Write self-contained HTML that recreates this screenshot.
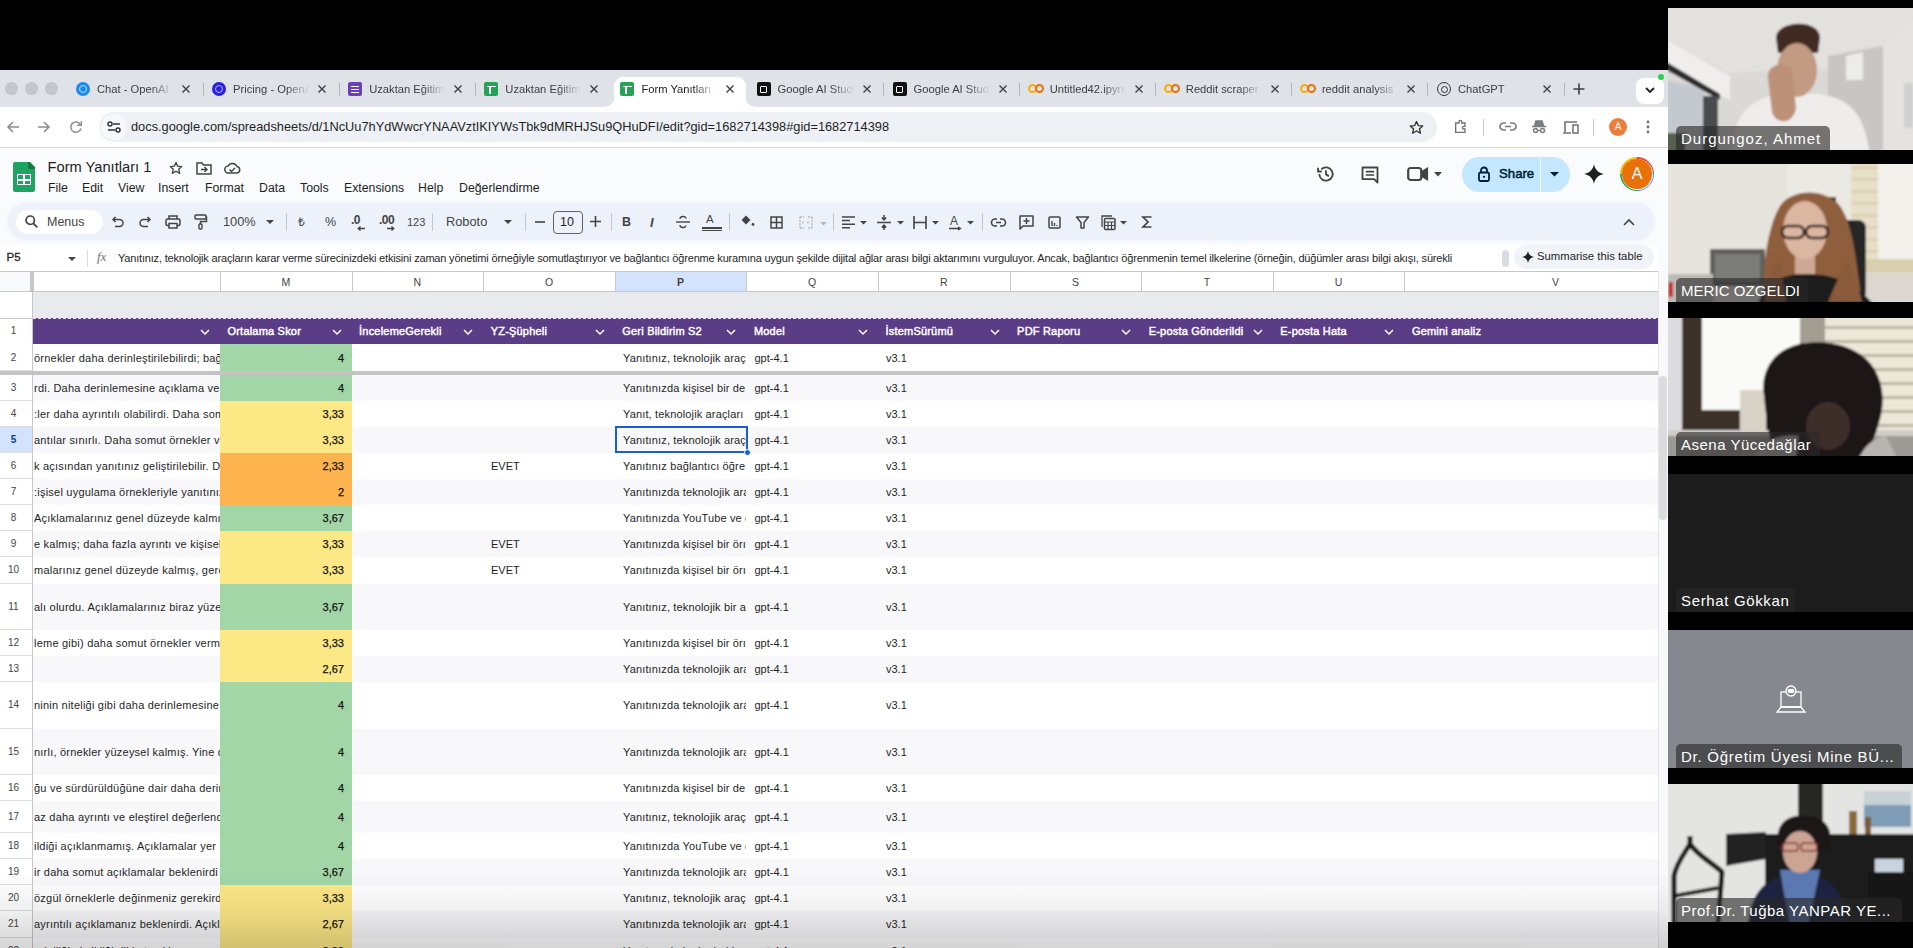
<!DOCTYPE html><html><head><meta charset="utf-8"><style>
*{margin:0;padding:0;box-sizing:border-box}
html,body{width:1913px;height:948px;overflow:hidden;background:#000;font-family:"Liberation Sans",sans-serif}
.ab{position:absolute}
.t{position:absolute;white-space:nowrap;line-height:1}
svg{position:absolute;overflow:visible}
</style></head><body>

<div class="ab" style="left:0;top:70px;width:1668px;height:878px;background:#f9fbfd;overflow:hidden">
<div class="ab" style="left:0;top:0;width:1668px;height:37px;background:#dfe2e7"></div>
<div class="ab" style="left:5.2px;top:12.2px;width:12.6px;height:12.6px;border-radius:50%;background:#c4c6ca"></div>
<div class="ab" style="left:25.2px;top:12.2px;width:12.6px;height:12.6px;border-radius:50%;background:#c4c6ca"></div>
<div class="ab" style="left:45.2px;top:12.2px;width:12.6px;height:12.6px;border-radius:50%;background:#c4c6ca"></div>
<div class="ab" style="left:614px;top:7px;width:132px;height:32px;background:#fff;border-radius:9px 9px 0 0"></div>
<div class="ab" style="left:606px;top:28px;width:8px;height:9px;background:radial-gradient(circle at 0 0,#dfe2e7 8px,#fff 8.5px)"></div>
<div class="ab" style="left:746px;top:28px;width:8px;height:9px;background:radial-gradient(circle at 100% 0,#dfe2e7 8px,#fff 8.5px)"></div>
<div class="ab" style="left:76.0px;top:12px;width:14px;height:14px;border-radius:50%;background:#1a8cf0"></div><div class="ab" style="left:79.0px;top:15px;width:8px;height:8px;border-radius:50%;border:1.3px solid #bfe0ff"></div>
<div class="t" style="left:97.0px;top:14px;font-size:11.2px;color:#3c4043;width:76px;overflow:hidden;-webkit-mask-image:linear-gradient(90deg,#000 70%,transparent)">Chat - OpenAI</div>
<svg style="left:182.0px;top:15px" width="8" height="8"><path d="M0.5 0.5L7.5 7.5M7.5 0.5L0.5 7.5" stroke="#3c4043" stroke-width="1.4"/></svg>
<div class="ab" style="left:202.5px;top:12.5px;width:1px;height:13px;background:#b4b6ba"></div>
<div class="ab" style="left:212.1px;top:12px;width:14px;height:14px;border-radius:50%;background:#2b20e2"></div><div class="ab" style="left:215.1px;top:15px;width:8px;height:8px;border-radius:50%;border:1.3px solid #b6aef7"></div>
<div class="t" style="left:233.1px;top:14px;font-size:11.2px;color:#3c4043;width:76px;overflow:hidden;-webkit-mask-image:linear-gradient(90deg,#000 70%,transparent)">Pricing - OpenAI</div>
<svg style="left:318.1px;top:15px" width="8" height="8"><path d="M0.5 0.5L7.5 7.5M7.5 0.5L0.5 7.5" stroke="#3c4043" stroke-width="1.4"/></svg>
<div class="ab" style="left:338.6px;top:12.5px;width:1px;height:13px;background:#b4b6ba"></div>
<div class="ab" style="left:348.2px;top:12px;width:14px;height:14px;border-radius:2px;background:#6b3fb8"></div><div class="ab" style="left:351.2px;top:15.5px;width:8px;height:7px;background:repeating-linear-gradient(#fff 0 1.4px,transparent 1.4px 2.9px)"></div>
<div class="t" style="left:369.2px;top:14px;font-size:11.2px;color:#3c4043;width:76px;overflow:hidden;-webkit-mask-image:linear-gradient(90deg,#000 70%,transparent)">Uzaktan Eğitim</div>
<svg style="left:454.2px;top:15px" width="8" height="8"><path d="M0.5 0.5L7.5 7.5M7.5 0.5L0.5 7.5" stroke="#3c4043" stroke-width="1.4"/></svg>
<div class="ab" style="left:474.7px;top:12.5px;width:1px;height:13px;background:#b4b6ba"></div>
<div class="ab" style="left:484.29999999999995px;top:12px;width:14px;height:14px;border-radius:2px;background:#23a455"></div><div class="ab" style="left:486.79999999999995px;top:15.5px;width:9px;height:1.6px;background:#fff"></div><div class="ab" style="left:489.29999999999995px;top:15.5px;width:1.6px;height:8px;background:#fff"></div>
<div class="t" style="left:505.29999999999995px;top:14px;font-size:11.2px;color:#3c4043;width:76px;overflow:hidden;-webkit-mask-image:linear-gradient(90deg,#000 70%,transparent)">Uzaktan Eğitim</div>
<svg style="left:590.3px;top:15px" width="8" height="8"><path d="M0.5 0.5L7.5 7.5M7.5 0.5L0.5 7.5" stroke="#3c4043" stroke-width="1.4"/></svg>
<div class="ab" style="left:620.4px;top:12px;width:14px;height:14px;border-radius:2px;background:#23a455"></div><div class="ab" style="left:622.9px;top:15.5px;width:9px;height:1.6px;background:#fff"></div><div class="ab" style="left:625.4px;top:15.5px;width:1.6px;height:8px;background:#fff"></div>
<div class="t" style="left:641.4px;top:14px;font-size:11.2px;color:#1f1f1f;width:76px;overflow:hidden;-webkit-mask-image:linear-gradient(90deg,#000 70%,transparent)">Form Yanıtları 1</div>
<svg style="left:726.4px;top:15px" width="8" height="8"><path d="M0.5 0.5L7.5 7.5M7.5 0.5L0.5 7.5" stroke="#3c4043" stroke-width="1.4"/></svg>
<div class="ab" style="left:756.5px;top:12px;width:14px;height:14px;border-radius:2px;background:#111"></div><div class="ab" style="left:760.0px;top:15.5px;width:7px;height:7px;border:1.3px solid #fff;border-radius:1px"></div>
<div class="t" style="left:777.5px;top:14px;font-size:11.2px;color:#3c4043;width:76px;overflow:hidden;-webkit-mask-image:linear-gradient(90deg,#000 70%,transparent)">Google AI Studio</div>
<svg style="left:862.5px;top:15px" width="8" height="8"><path d="M0.5 0.5L7.5 7.5M7.5 0.5L0.5 7.5" stroke="#3c4043" stroke-width="1.4"/></svg>
<div class="ab" style="left:883.0px;top:12.5px;width:1px;height:13px;background:#b4b6ba"></div>
<div class="ab" style="left:892.5999999999999px;top:12px;width:14px;height:14px;border-radius:2px;background:#111"></div><div class="ab" style="left:896.0999999999999px;top:15.5px;width:7px;height:7px;border:1.3px solid #fff;border-radius:1px"></div>
<div class="t" style="left:913.5999999999999px;top:14px;font-size:11.2px;color:#3c4043;width:76px;overflow:hidden;-webkit-mask-image:linear-gradient(90deg,#000 70%,transparent)">Google AI Studio</div>
<svg style="left:998.5999999999999px;top:15px" width="8" height="8"><path d="M0.5 0.5L7.5 7.5M7.5 0.5L0.5 7.5" stroke="#3c4043" stroke-width="1.4"/></svg>
<div class="ab" style="left:1019.0999999999999px;top:12.5px;width:1px;height:13px;background:#b4b6ba"></div>
<div class="ab" style="left:1027.6999999999998px;top:14px;width:9px;height:9px;border-radius:50%;border:2.6px solid #f9ab00"></div><div class="ab" style="left:1034.6999999999998px;top:14px;width:9px;height:9px;border-radius:50%;border:2.6px solid #e8710a"></div>
<div class="t" style="left:1049.6999999999998px;top:14px;font-size:11.2px;color:#3c4043;width:76px;overflow:hidden;-webkit-mask-image:linear-gradient(90deg,#000 70%,transparent)">Untitled42.ipynb</div>
<svg style="left:1134.6999999999998px;top:15px" width="8" height="8"><path d="M0.5 0.5L7.5 7.5M7.5 0.5L0.5 7.5" stroke="#3c4043" stroke-width="1.4"/></svg>
<div class="ab" style="left:1155.1999999999998px;top:12.5px;width:1px;height:13px;background:#b4b6ba"></div>
<div class="ab" style="left:1163.8px;top:14px;width:9px;height:9px;border-radius:50%;border:2.6px solid #f9ab00"></div><div class="ab" style="left:1170.8px;top:14px;width:9px;height:9px;border-radius:50%;border:2.6px solid #e8710a"></div>
<div class="t" style="left:1185.8px;top:14px;font-size:11.2px;color:#3c4043;width:76px;overflow:hidden;-webkit-mask-image:linear-gradient(90deg,#000 70%,transparent)">Reddit scraper</div>
<svg style="left:1270.8px;top:15px" width="8" height="8"><path d="M0.5 0.5L7.5 7.5M7.5 0.5L0.5 7.5" stroke="#3c4043" stroke-width="1.4"/></svg>
<div class="ab" style="left:1291.3px;top:12.5px;width:1px;height:13px;background:#b4b6ba"></div>
<div class="ab" style="left:1299.8999999999999px;top:14px;width:9px;height:9px;border-radius:50%;border:2.6px solid #f9ab00"></div><div class="ab" style="left:1306.8999999999999px;top:14px;width:9px;height:9px;border-radius:50%;border:2.6px solid #e8710a"></div>
<div class="t" style="left:1321.8999999999999px;top:14px;font-size:11.2px;color:#3c4043;width:76px;overflow:hidden;-webkit-mask-image:linear-gradient(90deg,#000 70%,transparent)">reddit analysis</div>
<svg style="left:1406.8999999999999px;top:15px" width="8" height="8"><path d="M0.5 0.5L7.5 7.5M7.5 0.5L0.5 7.5" stroke="#3c4043" stroke-width="1.4"/></svg>
<div class="ab" style="left:1427.3999999999999px;top:12.5px;width:1px;height:13px;background:#b4b6ba"></div>
<div class="ab" style="left:1437.0px;top:12px;width:14px;height:14px;border-radius:50%;border:1.6px solid #333"></div><div class="ab" style="left:1440.5px;top:15.5px;width:7px;height:7px;border-radius:50%;border:1.3px solid #333"></div>
<div class="t" style="left:1458.0px;top:14px;font-size:11.2px;color:#3c4043;width:76px;overflow:hidden;-webkit-mask-image:linear-gradient(90deg,#000 70%,transparent)">ChatGPT</div>
<svg style="left:1543.0px;top:15px" width="8" height="8"><path d="M0.5 0.5L7.5 7.5M7.5 0.5L0.5 7.5" stroke="#3c4043" stroke-width="1.4"/></svg>
<div class="ab" style="left:1563.5px;top:12.5px;width:1px;height:13px;background:#b4b6ba"></div>
<svg style="left:1573px;top:13px" width="12" height="12"><path d="M6 0.5V11.5M0.5 6H11.5" stroke="#3c4043" stroke-width="1.6"/></svg>
<div class="ab" style="left:1636px;top:8px;width:28px;height:26px;border-radius:8px;background:#fff"></div>
<svg style="left:1645px;top:17px" width="10" height="7"><path d="M1 1L5 5L9 1" stroke="#1f1f1f" stroke-width="1.8" fill="none"/></svg>
<div class="ab" style="left:1658px;top:4px;width:6px;height:6px;border-radius:50%;background:#2bd14a"></div>
<div class="ab" style="left:0;top:37px;width:1668px;height:40px;background:#fff"></div>
<div class="ab" style="left:0;top:77px;width:1668px;height:1px;background:#d9dbdf"></div>
<svg style="left:6px;top:50px" width="14" height="14"><path d="M13 7H2M7 2L2 7L7 12" stroke="#8a8d91" stroke-width="1.6" fill="none"/></svg>
<svg style="left:37px;top:50px" width="14" height="14"><path d="M1 7H12M7 2L12 7L7 12" stroke="#8a8d91" stroke-width="1.6" fill="none"/></svg>
<svg style="left:69px;top:50px" width="14" height="14"><path d="M11.5 4.5A5.2 5.2 0 1 0 12 8.5" stroke="#8a8d91" stroke-width="1.5" fill="none"/><path d="M12.3 1.2V5.3H8.2" stroke="#8a8d91" stroke-width="1.5" fill="none"/></svg>
<div class="ab" style="left:99px;top:42px;width:1338px;height:30px;border-radius:15px;background:#edf1f6"></div>
<div class="ab" style="left:101px;top:44px;width:26px;height:26px;border-radius:13px;background:#f6f8fb"></div>
<svg style="left:107px;top:51px" width="14" height="12"><circle cx="3" cy="3" r="2" stroke="#333" stroke-width="1.5" fill="none"/><path d="M6 3H13M1 9H8" stroke="#333" stroke-width="1.6"/><circle cx="11" cy="9" r="2" stroke="#333" stroke-width="1.5" fill="none"/></svg>
<div class="t" style="left:131px;top:51px;font-size:12.8px;color:#1f1f1f">docs.google.com/spreadsheets/d/1NcUu7hYdWwcrYNAAVztIKIYWsTbk9dMRHJSu9QHuDFI/edit?gid=1682714398#gid=1682714398</div>
<svg style="left:1409px;top:50px" width="15" height="15" viewBox="0 0 24 24"><path d="M12 2.5l2.9 6.4 7 .7-5.2 4.7 1.5 6.9L12 17.6l-6.2 3.6 1.5-6.9L2.1 9.6l7-.7z" stroke="#333" stroke-width="2.2" fill="none" stroke-linejoin="round"/></svg>
<svg style="left:1453px;top:49px" width="16" height="16" viewBox="0 0 24 24"><path d="M4 6h5V4a2 2 0 0 1 4 0v2h5v5h-2a2 2 0 0 0 0 4h2v5H4z" stroke="#6f7276" stroke-width="2" fill="none"/></svg>
<div class="ab" style="left:1483px;top:49px;width:1px;height:17px;background:#c8cacd"></div>
<svg style="left:1499px;top:52px" width="18" height="10"><path d="M7 1H4.5A3.5 3.5 0 0 0 4.5 8H7M11 1H13.5A3.5 3.5 0 0 1 13.5 8H11M6 4.5H12" stroke="#7a7d82" stroke-width="1.7" fill="none"/></svg>
<svg style="left:1531px;top:49px" width="16" height="16"><path d="M1 7.5H15M3.5 7L5 2H11L12.5 7" stroke="#7a7d82" stroke-width="1.6" fill="#7a7d82"/><circle cx="4.5" cy="11.5" r="2" stroke="#7a7d82" stroke-width="1.5" fill="none"/><circle cx="11.5" cy="11.5" r="2" stroke="#7a7d82" stroke-width="1.5" fill="none"/><path d="M6.5 11.5H9.5" stroke="#7a7d82" stroke-width="1.2"/></svg>
<svg style="left:1562px;top:50px" width="18" height="15"><path d="M3 12V2H15M1 13H9" stroke="#6f7276" stroke-width="1.6" fill="none"/><rect x="11" y="5" width="5" height="8" stroke="#6f7276" stroke-width="1.5" fill="none"/></svg>
<div class="ab" style="left:1593px;top:49px;width:1px;height:17px;background:#c8cacd"></div>
<div class="ab" style="left:1609px;top:48px;width:18px;height:18px;border-radius:50%;background:#ee7d3b;color:#fff;font-size:10px;text-align:center;line-height:18px">A</div>
<svg style="left:1646px;top:50px" width="4" height="14"><circle cx="2" cy="2" r="1.4" fill="#6f7276"/><circle cx="2" cy="7" r="1.4" fill="#6f7276"/><circle cx="2" cy="12" r="1.4" fill="#6f7276"/></svg>
<div class="ab" style="left:13px;top:92px;width:22px;height:30px;background:#1ea362;border-radius:2px 7px 2px 2px"></div>
<div class="ab" style="left:28px;top:92px;width:7px;height:7px;background:#137a43;border-radius:0 0 0 2px"></div>
<div class="ab" style="left:29px;top:91px;width:7px;height:7px;background:#f9fbfd;clip-path:polygon(0 0,100% 0,100% 100%)"></div>
<div class="ab" style="left:17px;top:104px;width:14px;height:11px;border:1.8px solid #fff"></div><div class="ab" style="left:17px;top:109px;width:14px;height:1.6px;background:#fff"></div><div class="ab" style="left:23.2px;top:104px;width:1.6px;height:11px;background:#fff"></div>
<div class="t" style="left:47.5px;top:90px;font-size:14.7px;color:#1f1f1f">Form Yanıtları 1</div>
<svg style="left:169px;top:91px" width="14" height="14" viewBox="0 0 24 24"><path d="M12 2.5l2.9 6.4 7 .7-5.2 4.7 1.5 6.9L12 17.6l-6.2 3.6 1.5-6.9L2.1 9.6l7-.7z" stroke="#444" stroke-width="2.3" fill="none" stroke-linejoin="round"/></svg>
<svg style="left:196px;top:92px" width="16" height="13"><path d="M1 1H6L7.5 3H15V12H1Z" stroke="#444" stroke-width="1.5" fill="none"/><path d="M5 7.5H11M8.5 5L11 7.5L8.5 10" stroke="#444" stroke-width="1.4" fill="none"/></svg>
<svg style="left:224px;top:92px" width="17" height="12"><path d="M4.5 11A3.5 3.5 0 0 1 4 4A5 5 0 0 1 13 4.5A3.3 3.3 0 0 1 13 11Z" stroke="#444" stroke-width="1.5" fill="none"/><path d="M5.5 7.5L7.5 9.5L11 6" stroke="#444" stroke-width="1.4" fill="none"/></svg>
<div class="t" style="left:48px;top:112px;font-size:12.3px;color:#1f1f1f">File</div>
<div class="t" style="left:82px;top:112px;font-size:12.3px;color:#1f1f1f">Edit</div>
<div class="t" style="left:118px;top:112px;font-size:12.3px;color:#1f1f1f">View</div>
<div class="t" style="left:158px;top:112px;font-size:12.3px;color:#1f1f1f">Insert</div>
<div class="t" style="left:205px;top:112px;font-size:12.3px;color:#1f1f1f">Format</div>
<div class="t" style="left:259px;top:112px;font-size:12.3px;color:#1f1f1f">Data</div>
<div class="t" style="left:300px;top:112px;font-size:12.3px;color:#1f1f1f">Tools</div>
<div class="t" style="left:344px;top:112px;font-size:12.3px;color:#1f1f1f">Extensions</div>
<div class="t" style="left:418px;top:112px;font-size:12.3px;color:#1f1f1f">Help</div>
<div class="t" style="left:459px;top:112px;font-size:12.3px;color:#1f1f1f">Değerlendirme</div>
<svg style="left:1316px;top:94px" width="20" height="20" viewBox="0 0 24 24"><path d="M4 12a8 8 0 1 0 2.4-5.7" stroke="#444" stroke-width="2.2" fill="none"/><path d="M2.5 4.5V9h4.5" stroke="#444" stroke-width="2.2" fill="none"/><path d="M12 7.5V12.5L15.5 14.5" stroke="#444" stroke-width="2.2" fill="none"/></svg>
<svg style="left:1360px;top:95px" width="20" height="20" viewBox="0 0 24 24"><path d="M3 3h18v14v4l-4-4H3z" stroke="#444" stroke-width="2.2" fill="none" stroke-linejoin="round"/><path d="M7 8h10M7 12h10" stroke="#444" stroke-width="2"/></svg>
<svg style="left:1407px;top:96px" width="22" height="16" viewBox="0 0 22 16"><rect x="1.2" y="2" width="13" height="12" rx="2.5" stroke="#444" stroke-width="2.2" fill="none"/><path d="M15 6L20 3V13L15 10" stroke="#444" stroke-width="2.2" fill="#444"/></svg>
<svg style="left:1434px;top:102px" width="8" height="5"><path d="M0 0H8L4 4.5Z" fill="#444"/></svg>
<div class="ab" style="left:1462px;top:87px;width:108px;height:35px;border-radius:18px;background:#c2e7ff"></div>
<div class="ab" style="left:1540px;top:87px;width:1px;height:35px;background:#f9fbfd"></div>
<svg style="left:1478px;top:96px" width="12" height="16"><rect x="1" y="6.5" width="10" height="8.5" rx="1.5" stroke="#001d35" stroke-width="1.8" fill="none"/><path d="M3 6.5V4.5A3 3 0 0 1 9 4.5V6.5" stroke="#001d35" stroke-width="1.8" fill="none"/><circle cx="6" cy="10.8" r="1.1" fill="#001d35"/></svg>
<div class="t" style="left:1499px;top:97px;font-size:13.2px;font-weight:400;-webkit-text-stroke:0.5px #001d35;color:#001d35">Share</div>
<svg style="left:1550px;top:102px" width="9" height="5"><path d="M0 0H9L4.5 4.5Z" fill="#001d35"/></svg>
<svg style="left:1584px;top:94px" width="20" height="20" viewBox="0 0 20 20"><path d="M10 0C10.8 5.5 14.5 9.2 20 10C14.5 10.8 10.8 14.5 10 20C9.2 14.5 5.5 10.8 0 10C5.5 9.2 9.2 5.5 10 0Z" fill="#1f1f1f"/></svg>
<div class="ab" style="left:1620px;top:87px;width:34px;height:34px;border-radius:50%;background:conic-gradient(#ea4335 0 25%,#4285f4 25% 50%,#34a853 50% 75%,#fbbc04 75%)"></div>
<div class="ab" style="left:1621.5px;top:88.5px;width:31px;height:31px;border-radius:50%;background:#fff"></div>
<div class="ab" style="left:1622.3px;top:89.30000000000001px;width:29.4px;height:29.4px;border-radius:50%;background:#e8710a;color:#fff;font-size:16px;text-align:center;line-height:29.4px">A</div>
<div class="ab" style="left:8px;top:133px;width:1646px;height:37px;border-radius:19px;background:#edf2fa;box-shadow:0 0 3px 1px #f0f3f9"></div>
<div class="ab" style="left:15.5px;top:140px;width:87px;height:24px;border-radius:12px;background:#fff"></div>
<svg style="left:25px;top:145px" width="13" height="13"><circle cx="5.2" cy="5.2" r="4.2" stroke="#444" stroke-width="1.7" fill="none"/><path d="M8.3 8.3L12.3 12.3" stroke="#444" stroke-width="1.9"/></svg>
<div class="t" style="left:47px;top:146px;font-size:12.5px;color:#444">Menus</div>
<svg style="left:112px;top:146px" width="12" height="11"><path d="M3.5 1L1 3.5L3.5 6M1 3.5H7.5A3.5 3.5 0 0 1 7.5 10.5H3" stroke="#444" stroke-width="1.5" fill="none"/></svg>
<svg style="left:139px;top:146px" width="12" height="11"><path d="M8.5 1L11 3.5L8.5 6M11 3.5H4.5A3.5 3.5 0 0 0 4.5 10.5H9" stroke="#444" stroke-width="1.5" fill="none"/></svg>
<svg style="left:165px;top:145px" width="16" height="14"><path d="M4 4V1H12V4" stroke="#444" stroke-width="1.5" fill="none"/><rect x="1" y="4" width="14" height="6.5" rx="1.5" stroke="#444" stroke-width="1.5" fill="none"/><rect x="4" y="8.5" width="8" height="4.5" stroke="#444" stroke-width="1.5" fill="#edf2fa"/></svg>
<svg style="left:194px;top:144px" width="13" height="16"><rect x="1" y="1" width="11" height="4" rx="1" stroke="#444" stroke-width="1.5" fill="none"/><path d="M12 3H12.5V7.5H6.5V10" stroke="#444" stroke-width="1.5" fill="none"/><rect x="5" y="10" width="3" height="5" rx="1" stroke="#444" stroke-width="1.4" fill="none"/></svg>
<div class="t" style="left:223px;top:146px;font-size:12.8px;color:#444">100%</div>
<svg style="left:266px;top:150px" width="8" height="4"><path d="M0 0H8L4 4Z" fill="#444"/></svg>
<div class="ab" style="left:286px;top:143px;width:1px;height:18px;background:#c7c7c7"></div>
<div class="t" style="left:298px;top:146px;font-size:12px;color:#444">₺</div>
<div class="t" style="left:325px;top:146px;font-size:12.5px;color:#444">%</div>
<div class="t" style="left:351px;top:144px;font-size:12px;color:#444;font-weight:700;letter-spacing:-0.5px">.0</div>
<svg style="left:357px;top:156px" width="8" height="5"><path d="M8 2.5H1.5M3.5 0.5L1.2 2.5L3.5 4.5" stroke="#444" stroke-width="1.3" fill="none"/></svg>
<div class="t" style="left:379px;top:144px;font-size:12px;color:#444;font-weight:700;letter-spacing:-0.5px">.00</div>
<svg style="left:387px;top:156px" width="8" height="5"><path d="M0 2.5H6.5M4.5 0.5L6.8 2.5L4.5 4.5" stroke="#444" stroke-width="1.3" fill="none"/></svg>
<div class="t" style="left:407px;top:147px;font-size:11px;color:#444">123</div>
<div class="ab" style="left:432px;top:143px;width:1px;height:18px;background:#c7c7c7"></div>
<div class="t" style="left:446px;top:146px;font-size:12.8px;color:#444">Roboto</div>
<svg style="left:504px;top:150px" width="8" height="4"><path d="M0 0H8L4 4Z" fill="#444"/></svg>
<div class="ab" style="left:525px;top:143px;width:1px;height:18px;background:#c7c7c7"></div>
<svg style="left:535px;top:151px" width="10" height="2"><path d="M0 1H10" stroke="#444" stroke-width="1.6"/></svg>
<div class="ab" style="left:553px;top:141px;width:30px;height:23px;border-radius:4px;border:1.3px solid #5f6368"></div>
<div class="t" style="left:560px;top:146px;font-size:12.5px;color:#1f1f1f">10</div>
<svg style="left:590px;top:146px" width="11" height="11"><path d="M0 5.5H11M5.5 0V11" stroke="#444" stroke-width="1.6"/></svg>
<div class="ab" style="left:611px;top:143px;width:1px;height:18px;background:#c7c7c7"></div>
<div class="t" style="left:622px;top:146px;font-size:12.5px;font-weight:700;color:#444">B</div>
<div class="t" style="left:650px;top:146px;font-size:13px;font-weight:700;font-style:italic;color:#444">I</div>
<svg style="left:676px;top:146px" width="14" height="12"><path d="M0 6H14" stroke="#444" stroke-width="1.4"/><path d="M10 2.5A3 2.2 0 0 0 4 3M4 9A3 2.2 0 0 0 10 9.5" stroke="#444" stroke-width="1.4" fill="none"/></svg>
<div class="t" style="left:706px;top:144px;font-size:11.5px;color:#444">A</div>
<div class="ab" style="left:702px;top:157px;width:20px;height:1.5px;background:#444"></div><div class="ab" style="left:702px;top:160px;width:20px;height:1.2px;background:#444"></div>
<div class="ab" style="left:729px;top:143px;width:1px;height:18px;background:#c7c7c7"></div>
<svg style="left:740px;top:144px" width="15" height="13"><path d="M1.5 6L6 1.5L10.5 6L6 10.5Z" fill="#444"/><circle cx="13" cy="10.5" r="1.4" fill="#444"/></svg>
<svg style="left:770px;top:146px" width="13" height="13"><rect x="1" y="1" width="11" height="11" stroke="#444" stroke-width="1.5" fill="none"/><path d="M6.5 1V12M1 6.5H12" stroke="#444" stroke-width="1.5"/></svg>
<svg style="left:799px;top:146px" width="14" height="13"><path d="M1 1H5M9 1H13M1 12H5M9 12H13M1 1V12M13 1V12M3 6.5H6M8 6.5H11" stroke="#b7b9bd" stroke-width="1.4" fill="none" stroke-dasharray="2 1"/></svg>
<svg style="left:820px;top:152px" width="7" height="4"><path d="M0 0H7L3.5 3.5Z" fill="#b7b9bd"/></svg>
<div class="ab" style="left:833px;top:143px;width:1px;height:18px;background:#c7c7c7"></div>
<svg style="left:842px;top:146px" width="13" height="13"><path d="M0 1H13M0 4.6H8M0 8.2H13M0 11.8H8" stroke="#444" stroke-width="1.5"/></svg>
<svg style="left:860px;top:151px" width="7" height="4"><path d="M0 0H7L3.5 3.5Z" fill="#444"/></svg>
<svg style="left:877px;top:145px" width="14" height="15"><path d="M0 7.5H14M7 0V5M4.8 2.5L7 4.8L9.2 2.5M7 15V10M4.8 12.5L7 10.2L9.2 12.5" stroke="#444" stroke-width="1.5" fill="none"/></svg>
<svg style="left:897px;top:151px" width="7" height="4"><path d="M0 0H7L3.5 3.5Z" fill="#444"/></svg>
<svg style="left:913px;top:146px" width="14" height="13"><path d="M1 0V13M13 0V13M1 6.5H13" stroke="#444" stroke-width="1.6" fill="none"/></svg>
<svg style="left:932px;top:151px" width="7" height="4"><path d="M0 0H7L3.5 3.5Z" fill="#444"/></svg>
<div class="t" style="left:950px;top:145px;font-size:12px;color:#444">A</div>
<svg style="left:949px;top:157px" width="14" height="4"><path d="M0 1.5H11M9 0L11.5 1.5L9 3" stroke="#444" stroke-width="1.3" fill="none"/></svg>
<svg style="left:967px;top:151px" width="7" height="4"><path d="M0 0H7L3.5 3.5Z" fill="#444"/></svg>
<div class="ab" style="left:982px;top:143px;width:1px;height:18px;background:#c7c7c7"></div>
<svg style="left:991px;top:148px" width="15" height="9"><path d="M6 1H4A3.5 3.5 0 0 0 4 8H6M9 1H11A3.5 3.5 0 0 1 11 8H9M5 4.5H10" stroke="#444" stroke-width="1.6" fill="none"/></svg>
<svg style="left:1019px;top:145px" width="15" height="15"><path d="M1 1H14V11H4L1 14Z" stroke="#444" stroke-width="1.5" fill="none" stroke-linejoin="round"/><path d="M7.5 3V9M4.5 6H10.5" stroke="#444" stroke-width="1.5"/></svg>
<svg style="left:1048px;top:146px" width="13" height="13"><rect x="1" y="1" width="11" height="11" rx="1" stroke="#444" stroke-width="1.5" fill="none"/><path d="M4 5V10M6.5 7V10M9 9V10" stroke="#444" stroke-width="1.4"/></svg>
<svg style="left:1076px;top:146px" width="13" height="13"><path d="M0.5 1H12.5L8 6.5V12H5V6.5Z" stroke="#444" stroke-width="1.5" fill="none" stroke-linejoin="round"/></svg>
<svg style="left:1101px;top:145px" width="15" height="15"><path d="M1 12V1H11" stroke="#444" stroke-width="1.3" fill="none"/><rect x="3.5" y="3.5" width="10.5" height="11" rx="1" stroke="#444" stroke-width="1.5" fill="none"/><path d="M3.5 7H14M7 7V14.5M10.5 7V14.5M3.5 10.5H14" stroke="#444" stroke-width="1.2"/></svg>
<svg style="left:1120px;top:151px" width="7" height="4"><path d="M0 0H7L3.5 3.5Z" fill="#444"/></svg>
<svg style="left:1142px;top:146px" width="10" height="12"><path d="M9.5 1H1L6 6L1 11H9.5" stroke="#444" stroke-width="1.7" fill="none"/></svg>
<svg style="left:1623px;top:149px" width="12" height="7"><path d="M1 6L6 1L11 6" stroke="#444" stroke-width="1.6" fill="none"/></svg>
<div class="ab" style="left:0;top:175px;width:1658px;height:26px;background:#fff"></div>
<div class="t" style="left:6.5px;top:182px;font-size:11.5px;color:#1f1f1f;-webkit-text-stroke:0.3px #1f1f1f">P5</div>
<svg style="left:68px;top:187px" width="8" height="4"><path d="M0 0H8L4 4Z" fill="#444"/></svg>
<div class="ab" style="left:86.5px;top:180px;width:1px;height:17px;background:#dadce0"></div>
<div class="t" style="left:97px;top:180px;font-size:13px;font-family:'Liberation Serif',serif;font-style:italic;color:#6f7378">fx</div>
<div class="t" style="left:118px;top:183px;font-size:11px;letter-spacing:-0.185px;color:#1f1f1f">Yanıtınız, teknolojik araçların karar verme sürecinizdeki etkisini zaman yönetimi örneğiyle somutlaştırıyor ve bağlantıcı öğrenme kuramına uygun şekilde dijital ağlar arası bilgi aktarımını vurguluyor. Ancak, bağlantıcı öğrenmenin temel ilkelerine (örneğin, düğümler arası bilgi akışı, sürekli</div>
<div class="ab" style="left:1502px;top:180px;width:7px;height:17px;border-radius:3.5px;background:#dadce0"></div>
<div class="ab" style="left:1514px;top:175px;width:140px;height:24px;border-radius:12px;background:#f0f4f9"></div>
<svg style="left:1522px;top:181px" width="12" height="12"><path d="M6 0C6.5 3.3 8.7 5.5 12 6C8.7 6.5 6.5 8.7 6 12C5.5 8.7 3.3 6.5 0 6C3.3 5.5 5.5 3.3 6 0Z" fill="#1f1f1f"/></svg>
<div class="t" style="left:1537px;top:181px;font-size:11.3px;color:#1f1f1f">Summarise this table</div>
<div class="ab" style="left:0;top:201px;width:1658px;height:21px;background:#fff;border-top:1px solid #c7c7c7;border-bottom:1px solid #c7c7c7"></div>
<div class="ab" style="left:0;top:202px;width:30px;height:19px;background:#f8f9fa"></div>
<div class="ab" style="left:29.5px;top:202px;width:4px;height:20px;background:#c7c7c7"></div>
<div class="ab" style="left:220.0px;top:202px;width:131.60000000000002px;height:19px;background:#fff;border-left:1px solid #c7c7c7"></div>
<div class="t" style="left:220.0px;width:131.60000000000002px;text-align:center;top:207px;font-size:10.5px;color:#444;font-weight:400">M</div>
<div class="ab" style="left:351.6px;top:202px;width:131.60000000000002px;height:19px;background:#fff;border-left:1px solid #c7c7c7"></div>
<div class="t" style="left:351.6px;width:131.60000000000002px;text-align:center;top:207px;font-size:10.5px;color:#444;font-weight:400">N</div>
<div class="ab" style="left:483.20000000000005px;top:202px;width:131.60000000000002px;height:19px;background:#fff;border-left:1px solid #c7c7c7"></div>
<div class="t" style="left:483.20000000000005px;width:131.60000000000002px;text-align:center;top:207px;font-size:10.5px;color:#444;font-weight:400">O</div>
<div class="ab" style="left:614.8000000000001px;top:202px;width:131.60000000000002px;height:19px;background:#d3e3fd;border-left:1px solid #c7c7c7"></div>
<div class="t" style="left:614.8000000000001px;width:131.60000000000002px;text-align:center;top:207px;font-size:10.5px;color:#444;font-weight:700">P</div>
<div class="ab" style="left:746.4000000000001px;top:202px;width:131.60000000000002px;height:19px;background:#fff;border-left:1px solid #c7c7c7"></div>
<div class="t" style="left:746.4000000000001px;width:131.60000000000002px;text-align:center;top:207px;font-size:10.5px;color:#444;font-weight:400">Q</div>
<div class="ab" style="left:878.0000000000001px;top:202px;width:131.60000000000002px;height:19px;background:#fff;border-left:1px solid #c7c7c7"></div>
<div class="t" style="left:878.0000000000001px;width:131.60000000000002px;text-align:center;top:207px;font-size:10.5px;color:#444;font-weight:400">R</div>
<div class="ab" style="left:1009.6000000000001px;top:202px;width:131.5999999999999px;height:19px;background:#fff;border-left:1px solid #c7c7c7"></div>
<div class="t" style="left:1009.6000000000001px;width:131.5999999999999px;text-align:center;top:207px;font-size:10.5px;color:#444;font-weight:400">S</div>
<div class="ab" style="left:1141.2px;top:202px;width:131.5999999999999px;height:19px;background:#fff;border-left:1px solid #c7c7c7"></div>
<div class="t" style="left:1141.2px;width:131.5999999999999px;text-align:center;top:207px;font-size:10.5px;color:#444;font-weight:400">T</div>
<div class="ab" style="left:1272.8px;top:202px;width:131.5999999999999px;height:19px;background:#fff;border-left:1px solid #c7c7c7"></div>
<div class="t" style="left:1272.8px;width:131.5999999999999px;text-align:center;top:207px;font-size:10.5px;color:#444;font-weight:400">U</div>
<div class="ab" style="left:1404.3999999999999px;top:202px;width:253.60000000000014px;height:19px;background:#fff;border-left:1px solid #c7c7c7"></div>
<div class="t" style="left:1404.3999999999999px;width:302px;text-align:center;top:207px;font-size:10.5px;color:#444;font-weight:400">V</div>
<div class="ab" style="left:0;top:222px;width:33px;height:26px;background:#fff;border-right:1px solid #c7c7c7"></div>
<div class="ab" style="left:33px;top:222px;width:1625px;height:26px;background:#e8eaed"></div>
<div class="ab" style="left:0;top:248px;width:33px;height:26px;background:#fff;border-right:1px solid #c7c7c7;border-top:1px solid #c7c7c7"></div>
<div class="t" style="left:0;width:27px;text-align:center;top:256px;font-size:10px;color:#444">1</div>
<div class="ab" style="left:33px;top:248px;width:1625px;height:26.5px;background:#5b3d87;border-bottom:1px solid #3b2660"></div>
<div class="ab" style="left:33px;top:248px;width:1625px;height:1px;background:repeating-linear-gradient(90deg,#e9def8 0 3px,transparent 3px 5px)"></div>
<svg style="left:200px;top:259px" width="10" height="6"><path d="M1 1L5 5L9 1" stroke="#fff" stroke-width="1.5" fill="none"/></svg>
<div class="t" style="left:227.5px;top:255.5px;font-size:11px;font-weight:400;-webkit-text-stroke:0.45px #fff;color:#fff;letter-spacing:0.2px">Ortalama Skor</div>
<svg style="left:331.6px;top:259px" width="10" height="6"><path d="M1 1L5 5L9 1" stroke="#fff" stroke-width="1.5" fill="none"/></svg>
<div class="t" style="left:359.1px;top:255.5px;font-size:11px;font-weight:400;-webkit-text-stroke:0.45px #fff;color:#fff;letter-spacing:0.2px">İncelemeGerekli</div>
<svg style="left:463.20000000000005px;top:259px" width="10" height="6"><path d="M1 1L5 5L9 1" stroke="#fff" stroke-width="1.5" fill="none"/></svg>
<div class="t" style="left:490.70000000000005px;top:255.5px;font-size:11px;font-weight:400;-webkit-text-stroke:0.45px #fff;color:#fff;letter-spacing:0.2px">YZ-Şüpheli</div>
<svg style="left:594.8000000000001px;top:259px" width="10" height="6"><path d="M1 1L5 5L9 1" stroke="#fff" stroke-width="1.5" fill="none"/></svg>
<div class="t" style="left:622.3000000000001px;top:255.5px;font-size:11px;font-weight:400;-webkit-text-stroke:0.45px #fff;color:#fff;letter-spacing:0.2px">Geri Bildirim S2</div>
<svg style="left:726.4000000000001px;top:259px" width="10" height="6"><path d="M1 1L5 5L9 1" stroke="#fff" stroke-width="1.5" fill="none"/></svg>
<div class="t" style="left:753.9000000000001px;top:255.5px;font-size:11px;font-weight:400;-webkit-text-stroke:0.45px #fff;color:#fff;letter-spacing:0.2px">Model</div>
<svg style="left:858.0000000000001px;top:259px" width="10" height="6"><path d="M1 1L5 5L9 1" stroke="#fff" stroke-width="1.5" fill="none"/></svg>
<div class="t" style="left:885.5000000000001px;top:255.5px;font-size:11px;font-weight:400;-webkit-text-stroke:0.45px #fff;color:#fff;letter-spacing:0.2px">İstemSürümü</div>
<svg style="left:989.6000000000001px;top:259px" width="10" height="6"><path d="M1 1L5 5L9 1" stroke="#fff" stroke-width="1.5" fill="none"/></svg>
<div class="t" style="left:1017.1000000000001px;top:255.5px;font-size:11px;font-weight:400;-webkit-text-stroke:0.45px #fff;color:#fff;letter-spacing:0.2px">PDF Raporu</div>
<svg style="left:1121.2px;top:259px" width="10" height="6"><path d="M1 1L5 5L9 1" stroke="#fff" stroke-width="1.5" fill="none"/></svg>
<div class="t" style="left:1148.7px;top:255.5px;font-size:11px;font-weight:400;-webkit-text-stroke:0.45px #fff;color:#fff;letter-spacing:0.2px">E-posta Gönderildi</div>
<svg style="left:1252.8px;top:259px" width="10" height="6"><path d="M1 1L5 5L9 1" stroke="#fff" stroke-width="1.5" fill="none"/></svg>
<div class="t" style="left:1280.3px;top:255.5px;font-size:11px;font-weight:400;-webkit-text-stroke:0.45px #fff;color:#fff;letter-spacing:0.2px">E-posta Hata</div>
<svg style="left:1384.3999999999999px;top:259px" width="10" height="6"><path d="M1 1L5 5L9 1" stroke="#fff" stroke-width="1.5" fill="none"/></svg>
<div class="t" style="left:1411.8999999999999px;top:255.5px;font-size:11px;font-weight:400;-webkit-text-stroke:0.45px #fff;color:#fff;letter-spacing:0.2px">Gemini analiz</div>
<div class="ab" style="left:0;top:301px;width:1658px;height:3.5px;background:#c4c4c4"></div>
<div class="ab" style="left:0;top:274px;width:33px;height:27px;background:#fff;border-right:1px solid #c7c7c7;border-bottom:1px solid #dadce0"></div>
<div class="t" style="left:0;width:27px;text-align:center;top:282.5px;font-size:10px;color:#444;font-weight:400">2</div>
<div class="ab" style="left:33px;top:274px;width:1625px;height:27px;background:#fff"></div>
<div class="ab" style="left:220px;top:274px;width:132px;height:27px;background:#a3d6a6"></div>
<div class="t" style="left:34px;top:282.7px;width:186px;overflow:hidden;font-size:11px;letter-spacing:0.22px;color:#1f1f1f">örnekler daha derinleştirilebilirdi; bağlantıcı</div>
<div class="t" style="left:220px;width:124px;text-align:right;top:282.7px;font-size:11px;color:#111;-webkit-text-stroke:0.25px #111">4</div>
<div class="t" style="left:623px;top:282.7px;width:123px;overflow:hidden;font-size:11px;letter-spacing:0.15px;color:#1f1f1f">Yanıtınız, teknolojik araç</div>
<div class="t" style="left:754.5px;top:282.7px;font-size:11px;color:#1f1f1f">gpt-4.1</div>
<div class="t" style="left:886px;top:282.7px;font-size:11px;color:#1f1f1f">v3.1</div>
<div class="ab" style="left:0;top:304.5px;width:33px;height:26px;background:#fff;border-right:1px solid #c7c7c7;border-bottom:1px solid #dadce0"></div>
<div class="t" style="left:0;width:27px;text-align:center;top:312.5px;font-size:10px;color:#444;font-weight:400">3</div>
<div class="ab" style="left:33px;top:304.5px;width:1625px;height:26px;background:#f8f8fa"></div>
<div class="ab" style="left:220px;top:304.5px;width:132px;height:26px;background:#a3d6a6"></div>
<div class="t" style="left:34px;top:312.7px;width:186px;overflow:hidden;font-size:11px;letter-spacing:0.22px;color:#1f1f1f">rdi. Daha derinlemesine açıklama ve örnek</div>
<div class="t" style="left:220px;width:124px;text-align:right;top:312.7px;font-size:11px;color:#111;-webkit-text-stroke:0.25px #111">4</div>
<div class="t" style="left:623px;top:312.7px;width:123px;overflow:hidden;font-size:11px;letter-spacing:0.15px;color:#1f1f1f">Yanıtınızda kişisel bir de</div>
<div class="t" style="left:754.5px;top:312.7px;font-size:11px;color:#1f1f1f">gpt-4.1</div>
<div class="t" style="left:886px;top:312.7px;font-size:11px;color:#1f1f1f">v3.1</div>
<div class="ab" style="left:0;top:330.5px;width:33px;height:26px;background:#fff;border-right:1px solid #c7c7c7;border-bottom:1px solid #dadce0"></div>
<div class="t" style="left:0;width:27px;text-align:center;top:338.5px;font-size:10px;color:#444;font-weight:400">4</div>
<div class="ab" style="left:33px;top:330.5px;width:1625px;height:26px;background:#fff"></div>
<div class="ab" style="left:220px;top:330.5px;width:132px;height:26px;background:#fde886"></div>
<div class="t" style="left:34px;top:338.7px;width:186px;overflow:hidden;font-size:11px;letter-spacing:0.22px;color:#1f1f1f">:ler daha ayrıntılı olabilirdi. Daha somut</div>
<div class="t" style="left:220px;width:124px;text-align:right;top:338.7px;font-size:11px;color:#111;-webkit-text-stroke:0.25px #111">3,33</div>
<div class="t" style="left:623px;top:338.7px;width:123px;overflow:hidden;font-size:11px;letter-spacing:0.15px;color:#1f1f1f">Yanıt, teknolojik araçları</div>
<div class="t" style="left:754.5px;top:338.7px;font-size:11px;color:#1f1f1f">gpt-4.1</div>
<div class="t" style="left:886px;top:338.7px;font-size:11px;color:#1f1f1f">v3.1</div>
<div class="ab" style="left:0;top:356.5px;width:33px;height:26px;background:#d3e3fd;border-right:1px solid #c7c7c7;border-bottom:1px solid #dadce0"></div>
<div class="t" style="left:0;width:27px;text-align:center;top:364.5px;font-size:10px;color:#0b3f8f;font-weight:700">5</div>
<div class="ab" style="left:33px;top:356.5px;width:1625px;height:26px;background:#f8f8fa"></div>
<div class="ab" style="left:220px;top:356.5px;width:132px;height:26px;background:#fde886"></div>
<div class="t" style="left:34px;top:364.7px;width:186px;overflow:hidden;font-size:11px;letter-spacing:0.22px;color:#1f1f1f">antılar sınırlı. Daha somut örnekler ve</div>
<div class="t" style="left:220px;width:124px;text-align:right;top:364.7px;font-size:11px;color:#111;-webkit-text-stroke:0.25px #111">3,33</div>
<div class="t" style="left:623px;top:364.7px;width:123px;overflow:hidden;font-size:11px;letter-spacing:0.15px;color:#1f1f1f">Yanıtınız, teknolojik araç</div>
<div class="t" style="left:754.5px;top:364.7px;font-size:11px;color:#1f1f1f">gpt-4.1</div>
<div class="t" style="left:886px;top:364.7px;font-size:11px;color:#1f1f1f">v3.1</div>
<div class="ab" style="left:0;top:382.5px;width:33px;height:26px;background:#fff;border-right:1px solid #c7c7c7;border-bottom:1px solid #dadce0"></div>
<div class="t" style="left:0;width:27px;text-align:center;top:390.5px;font-size:10px;color:#444;font-weight:400">6</div>
<div class="ab" style="left:33px;top:382.5px;width:1625px;height:26px;background:#fff"></div>
<div class="ab" style="left:220px;top:382.5px;width:132px;height:26px;background:#fdb44f"></div>
<div class="t" style="left:34px;top:390.7px;width:186px;overflow:hidden;font-size:11px;letter-spacing:0.22px;color:#1f1f1f">k açısından yanıtınız geliştirilebilir. Daha</div>
<div class="t" style="left:220px;width:124px;text-align:right;top:390.7px;font-size:11px;color:#111;-webkit-text-stroke:0.25px #111">2,33</div>
<div class="t" style="left:491px;top:390.7px;font-size:11px;color:#1f1f1f">EVET</div>
<div class="t" style="left:623px;top:390.7px;width:123px;overflow:hidden;font-size:11px;letter-spacing:0.15px;color:#1f1f1f">Yanıtınız bağlantıcı öğre</div>
<div class="t" style="left:754.5px;top:390.7px;font-size:11px;color:#1f1f1f">gpt-4.1</div>
<div class="t" style="left:886px;top:390.7px;font-size:11px;color:#1f1f1f">v3.1</div>
<div class="ab" style="left:0;top:408.5px;width:33px;height:26px;background:#fff;border-right:1px solid #c7c7c7;border-bottom:1px solid #dadce0"></div>
<div class="t" style="left:0;width:27px;text-align:center;top:416.5px;font-size:10px;color:#444;font-weight:400">7</div>
<div class="ab" style="left:33px;top:408.5px;width:1625px;height:26px;background:#f8f8fa"></div>
<div class="ab" style="left:220px;top:408.5px;width:132px;height:26px;background:#fdb44f"></div>
<div class="t" style="left:34px;top:416.7px;width:186px;overflow:hidden;font-size:11px;letter-spacing:0.22px;color:#1f1f1f">:işisel uygulama örnekleriyle yanıtınızı</div>
<div class="t" style="left:220px;width:124px;text-align:right;top:416.7px;font-size:11px;color:#111;-webkit-text-stroke:0.25px #111">2</div>
<div class="t" style="left:623px;top:416.7px;width:123px;overflow:hidden;font-size:11px;letter-spacing:0.15px;color:#1f1f1f">Yanıtınızda teknolojik araç</div>
<div class="t" style="left:754.5px;top:416.7px;font-size:11px;color:#1f1f1f">gpt-4.1</div>
<div class="t" style="left:886px;top:416.7px;font-size:11px;color:#1f1f1f">v3.1</div>
<div class="ab" style="left:0;top:434.5px;width:33px;height:26px;background:#fff;border-right:1px solid #c7c7c7;border-bottom:1px solid #dadce0"></div>
<div class="t" style="left:0;width:27px;text-align:center;top:442.5px;font-size:10px;color:#444;font-weight:400">8</div>
<div class="ab" style="left:33px;top:434.5px;width:1625px;height:26px;background:#fff"></div>
<div class="ab" style="left:220px;top:434.5px;width:132px;height:26px;background:#a3d6a6"></div>
<div class="t" style="left:34px;top:442.70000000000005px;width:186px;overflow:hidden;font-size:11px;letter-spacing:0.22px;color:#1f1f1f"> Açıklamalarınız genel düzeyde kalmış</div>
<div class="t" style="left:220px;width:124px;text-align:right;top:442.70000000000005px;font-size:11px;color:#111;-webkit-text-stroke:0.25px #111">3,67</div>
<div class="t" style="left:623px;top:442.70000000000005px;width:123px;overflow:hidden;font-size:11px;letter-spacing:0.15px;color:#1f1f1f">Yanıtınızda YouTube ve ö</div>
<div class="t" style="left:754.5px;top:442.70000000000005px;font-size:11px;color:#1f1f1f">gpt-4.1</div>
<div class="t" style="left:886px;top:442.70000000000005px;font-size:11px;color:#1f1f1f">v3.1</div>
<div class="ab" style="left:0;top:460.5px;width:33px;height:26px;background:#fff;border-right:1px solid #c7c7c7;border-bottom:1px solid #dadce0"></div>
<div class="t" style="left:0;width:27px;text-align:center;top:468.5px;font-size:10px;color:#444;font-weight:400">9</div>
<div class="ab" style="left:33px;top:460.5px;width:1625px;height:26px;background:#f8f8fa"></div>
<div class="ab" style="left:220px;top:460.5px;width:132px;height:26px;background:#fde886"></div>
<div class="t" style="left:34px;top:468.70000000000005px;width:186px;overflow:hidden;font-size:11px;letter-spacing:0.22px;color:#1f1f1f">e kalmış; daha fazla ayrıntı ve kişisel ör</div>
<div class="t" style="left:220px;width:124px;text-align:right;top:468.70000000000005px;font-size:11px;color:#111;-webkit-text-stroke:0.25px #111">3,33</div>
<div class="t" style="left:491px;top:468.70000000000005px;font-size:11px;color:#1f1f1f">EVET</div>
<div class="t" style="left:623px;top:468.70000000000005px;width:123px;overflow:hidden;font-size:11px;letter-spacing:0.15px;color:#1f1f1f">Yanıtınızda kişisel bir örı</div>
<div class="t" style="left:754.5px;top:468.70000000000005px;font-size:11px;color:#1f1f1f">gpt-4.1</div>
<div class="t" style="left:886px;top:468.70000000000005px;font-size:11px;color:#1f1f1f">v3.1</div>
<div class="ab" style="left:0;top:486.5px;width:33px;height:27px;background:#fff;border-right:1px solid #c7c7c7;border-bottom:1px solid #dadce0"></div>
<div class="t" style="left:0;width:27px;text-align:center;top:495.0px;font-size:10px;color:#444;font-weight:400">10</div>
<div class="ab" style="left:33px;top:486.5px;width:1625px;height:27px;background:#fff"></div>
<div class="ab" style="left:220px;top:486.5px;width:132px;height:27px;background:#fde886"></div>
<div class="t" style="left:34px;top:495.20000000000005px;width:186px;overflow:hidden;font-size:11px;letter-spacing:0.22px;color:#1f1f1f">malarınız genel düzeyde kalmış, gerek</div>
<div class="t" style="left:220px;width:124px;text-align:right;top:495.20000000000005px;font-size:11px;color:#111;-webkit-text-stroke:0.25px #111">3,33</div>
<div class="t" style="left:491px;top:495.20000000000005px;font-size:11px;color:#1f1f1f">EVET</div>
<div class="t" style="left:623px;top:495.20000000000005px;width:123px;overflow:hidden;font-size:11px;letter-spacing:0.15px;color:#1f1f1f">Yanıtınızda kişisel bir örı</div>
<div class="t" style="left:754.5px;top:495.20000000000005px;font-size:11px;color:#1f1f1f">gpt-4.1</div>
<div class="t" style="left:886px;top:495.20000000000005px;font-size:11px;color:#1f1f1f">v3.1</div>
<div class="ab" style="left:0;top:513.5px;width:33px;height:46px;background:#fff;border-right:1px solid #c7c7c7;border-bottom:1px solid #dadce0"></div>
<div class="t" style="left:0;width:27px;text-align:center;top:531.5px;font-size:10px;color:#444;font-weight:400">11</div>
<div class="ab" style="left:33px;top:513.5px;width:1625px;height:46px;background:#f8f8fa"></div>
<div class="ab" style="left:220px;top:513.5px;width:132px;height:46px;background:#a3d6a6"></div>
<div class="t" style="left:34px;top:531.7px;width:186px;overflow:hidden;font-size:11px;letter-spacing:0.22px;color:#1f1f1f">alı olurdu. Açıklamalarınız biraz yüzeysel</div>
<div class="t" style="left:220px;width:124px;text-align:right;top:531.7px;font-size:11px;color:#111;-webkit-text-stroke:0.25px #111">3,67</div>
<div class="t" style="left:623px;top:531.7px;width:123px;overflow:hidden;font-size:11px;letter-spacing:0.15px;color:#1f1f1f">Yanıtınız, teknolojik bir a</div>
<div class="t" style="left:754.5px;top:531.7px;font-size:11px;color:#1f1f1f">gpt-4.1</div>
<div class="t" style="left:886px;top:531.7px;font-size:11px;color:#1f1f1f">v3.1</div>
<div class="ab" style="left:0;top:559.5px;width:33px;height:26px;background:#fff;border-right:1px solid #c7c7c7;border-bottom:1px solid #dadce0"></div>
<div class="t" style="left:0;width:27px;text-align:center;top:567.5px;font-size:10px;color:#444;font-weight:400">12</div>
<div class="ab" style="left:33px;top:559.5px;width:1625px;height:26px;background:#fff"></div>
<div class="ab" style="left:220px;top:559.5px;width:132px;height:26px;background:#fde886"></div>
<div class="t" style="left:34px;top:567.7px;width:186px;overflow:hidden;font-size:11px;letter-spacing:0.22px;color:#1f1f1f">leme gibi) daha somut örnekler verme</div>
<div class="t" style="left:220px;width:124px;text-align:right;top:567.7px;font-size:11px;color:#111;-webkit-text-stroke:0.25px #111">3,33</div>
<div class="t" style="left:623px;top:567.7px;width:123px;overflow:hidden;font-size:11px;letter-spacing:0.15px;color:#1f1f1f">Yanıtınızda kişisel bir örı</div>
<div class="t" style="left:754.5px;top:567.7px;font-size:11px;color:#1f1f1f">gpt-4.1</div>
<div class="t" style="left:886px;top:567.7px;font-size:11px;color:#1f1f1f">v3.1</div>
<div class="ab" style="left:0;top:585.5px;width:33px;height:26.5px;background:#fff;border-right:1px solid #c7c7c7;border-bottom:1px solid #dadce0"></div>
<div class="t" style="left:0;width:27px;text-align:center;top:593.75px;font-size:10px;color:#444;font-weight:400">13</div>
<div class="ab" style="left:33px;top:585.5px;width:1625px;height:26.5px;background:#f8f8fa"></div>
<div class="ab" style="left:220px;top:585.5px;width:132px;height:26.5px;background:#fde886"></div>
<div class="t" style="left:34px;top:593.95px;width:186px;overflow:hidden;font-size:11px;letter-spacing:0.22px;color:#1f1f1f"></div>
<div class="t" style="left:220px;width:124px;text-align:right;top:593.95px;font-size:11px;color:#111;-webkit-text-stroke:0.25px #111">2,67</div>
<div class="t" style="left:623px;top:593.95px;width:123px;overflow:hidden;font-size:11px;letter-spacing:0.15px;color:#1f1f1f">Yanıtınızda teknolojik ara</div>
<div class="t" style="left:754.5px;top:593.95px;font-size:11px;color:#1f1f1f">gpt-4.1</div>
<div class="t" style="left:886px;top:593.95px;font-size:11px;color:#1f1f1f">v3.1</div>
<div class="ab" style="left:0;top:612px;width:33px;height:46.5px;background:#fff;border-right:1px solid #c7c7c7;border-bottom:1px solid #dadce0"></div>
<div class="t" style="left:0;width:27px;text-align:center;top:630.25px;font-size:10px;color:#444;font-weight:400">14</div>
<div class="ab" style="left:33px;top:612px;width:1625px;height:46.5px;background:#fff"></div>
<div class="ab" style="left:220px;top:612px;width:132px;height:46.5px;background:#a3d6a6"></div>
<div class="t" style="left:34px;top:630.45px;width:186px;overflow:hidden;font-size:11px;letter-spacing:0.22px;color:#1f1f1f">ninin niteliği gibi daha derinlemesine</div>
<div class="t" style="left:220px;width:124px;text-align:right;top:630.45px;font-size:11px;color:#111;-webkit-text-stroke:0.25px #111">4</div>
<div class="t" style="left:623px;top:630.45px;width:123px;overflow:hidden;font-size:11px;letter-spacing:0.15px;color:#1f1f1f">Yanıtınızda teknolojik ara</div>
<div class="t" style="left:754.5px;top:630.45px;font-size:11px;color:#1f1f1f">gpt-4.1</div>
<div class="t" style="left:886px;top:630.45px;font-size:11px;color:#1f1f1f">v3.1</div>
<div class="ab" style="left:0;top:658.5px;width:33px;height:46px;background:#fff;border-right:1px solid #c7c7c7;border-bottom:1px solid #dadce0"></div>
<div class="t" style="left:0;width:27px;text-align:center;top:676.5px;font-size:10px;color:#444;font-weight:400">15</div>
<div class="ab" style="left:33px;top:658.5px;width:1625px;height:46px;background:#f8f8fa"></div>
<div class="ab" style="left:220px;top:658.5px;width:132px;height:46px;background:#a3d6a6"></div>
<div class="t" style="left:34px;top:676.7px;width:186px;overflow:hidden;font-size:11px;letter-spacing:0.22px;color:#1f1f1f">nırlı, örnekler yüzeysel kalmış. Yine de</div>
<div class="t" style="left:220px;width:124px;text-align:right;top:676.7px;font-size:11px;color:#111;-webkit-text-stroke:0.25px #111">4</div>
<div class="t" style="left:623px;top:676.7px;width:123px;overflow:hidden;font-size:11px;letter-spacing:0.15px;color:#1f1f1f">Yanıtınızda teknolojik ara</div>
<div class="t" style="left:754.5px;top:676.7px;font-size:11px;color:#1f1f1f">gpt-4.1</div>
<div class="t" style="left:886px;top:676.7px;font-size:11px;color:#1f1f1f">v3.1</div>
<div class="ab" style="left:0;top:704.5px;width:33px;height:26.5px;background:#fff;border-right:1px solid #c7c7c7;border-bottom:1px solid #dadce0"></div>
<div class="t" style="left:0;width:27px;text-align:center;top:712.75px;font-size:10px;color:#444;font-weight:400">16</div>
<div class="ab" style="left:33px;top:704.5px;width:1625px;height:26.5px;background:#fff"></div>
<div class="ab" style="left:220px;top:704.5px;width:132px;height:26.5px;background:#a3d6a6"></div>
<div class="t" style="left:34px;top:712.95px;width:186px;overflow:hidden;font-size:11px;letter-spacing:0.22px;color:#1f1f1f">ğu ve sürdürüldüğüne dair daha derin</div>
<div class="t" style="left:220px;width:124px;text-align:right;top:712.95px;font-size:11px;color:#111;-webkit-text-stroke:0.25px #111">4</div>
<div class="t" style="left:623px;top:712.95px;width:123px;overflow:hidden;font-size:11px;letter-spacing:0.15px;color:#1f1f1f">Yanıtınızda kişisel bir de</div>
<div class="t" style="left:754.5px;top:712.95px;font-size:11px;color:#1f1f1f">gpt-4.1</div>
<div class="t" style="left:886px;top:712.95px;font-size:11px;color:#1f1f1f">v3.1</div>
<div class="ab" style="left:0;top:731px;width:33px;height:32px;background:#fff;border-right:1px solid #c7c7c7;border-bottom:1px solid #dadce0"></div>
<div class="t" style="left:0;width:27px;text-align:center;top:742.0px;font-size:10px;color:#444;font-weight:400">17</div>
<div class="ab" style="left:33px;top:731px;width:1625px;height:32px;background:#f8f8fa"></div>
<div class="ab" style="left:220px;top:731px;width:132px;height:32px;background:#a3d6a6"></div>
<div class="t" style="left:34px;top:742.2px;width:186px;overflow:hidden;font-size:11px;letter-spacing:0.22px;color:#1f1f1f">az daha ayrıntı ve eleştirel değerlendirme</div>
<div class="t" style="left:220px;width:124px;text-align:right;top:742.2px;font-size:11px;color:#111;-webkit-text-stroke:0.25px #111">4</div>
<div class="t" style="left:623px;top:742.2px;width:123px;overflow:hidden;font-size:11px;letter-spacing:0.15px;color:#1f1f1f">Yanıtınız, teknolojik araç</div>
<div class="t" style="left:754.5px;top:742.2px;font-size:11px;color:#1f1f1f">gpt-4.1</div>
<div class="t" style="left:886px;top:742.2px;font-size:11px;color:#1f1f1f">v3.1</div>
<div class="ab" style="left:0;top:763px;width:33px;height:26px;background:#fff;border-right:1px solid #c7c7c7;border-bottom:1px solid #dadce0"></div>
<div class="t" style="left:0;width:27px;text-align:center;top:771.0px;font-size:10px;color:#444;font-weight:400">18</div>
<div class="ab" style="left:33px;top:763px;width:1625px;height:26px;background:#fff"></div>
<div class="ab" style="left:220px;top:763px;width:132px;height:26px;background:#a3d6a6"></div>
<div class="t" style="left:34px;top:771.2px;width:186px;overflow:hidden;font-size:11px;letter-spacing:0.22px;color:#1f1f1f">ildiği açıklanmamış. Açıklamalar yer</div>
<div class="t" style="left:220px;width:124px;text-align:right;top:771.2px;font-size:11px;color:#111;-webkit-text-stroke:0.25px #111">4</div>
<div class="t" style="left:623px;top:771.2px;width:123px;overflow:hidden;font-size:11px;letter-spacing:0.15px;color:#1f1f1f">Yanıtınızda YouTube ve ö</div>
<div class="t" style="left:754.5px;top:771.2px;font-size:11px;color:#1f1f1f">gpt-4.1</div>
<div class="t" style="left:886px;top:771.2px;font-size:11px;color:#1f1f1f">v3.1</div>
<div class="ab" style="left:0;top:789px;width:33px;height:26px;background:#fff;border-right:1px solid #c7c7c7;border-bottom:1px solid #dadce0"></div>
<div class="t" style="left:0;width:27px;text-align:center;top:797.0px;font-size:10px;color:#444;font-weight:400">19</div>
<div class="ab" style="left:33px;top:789px;width:1625px;height:26px;background:#f8f8fa"></div>
<div class="ab" style="left:220px;top:789px;width:132px;height:26px;background:#a3d6a6"></div>
<div class="t" style="left:34px;top:797.2px;width:186px;overflow:hidden;font-size:11px;letter-spacing:0.22px;color:#1f1f1f">ir daha somut açıklamalar beklenirdi</div>
<div class="t" style="left:220px;width:124px;text-align:right;top:797.2px;font-size:11px;color:#111;-webkit-text-stroke:0.25px #111">3,67</div>
<div class="t" style="left:623px;top:797.2px;width:123px;overflow:hidden;font-size:11px;letter-spacing:0.15px;color:#1f1f1f">Yanıtınızda teknolojik ara</div>
<div class="t" style="left:754.5px;top:797.2px;font-size:11px;color:#1f1f1f">gpt-4.1</div>
<div class="t" style="left:886px;top:797.2px;font-size:11px;color:#1f1f1f">v3.1</div>
<div class="ab" style="left:0;top:815px;width:33px;height:26px;background:#fff;border-right:1px solid #c7c7c7;border-bottom:1px solid #dadce0"></div>
<div class="t" style="left:0;width:27px;text-align:center;top:823.0px;font-size:10px;color:#444;font-weight:400">20</div>
<div class="ab" style="left:33px;top:815px;width:1625px;height:26px;background:#fff"></div>
<div class="ab" style="left:220px;top:815px;width:132px;height:26px;background:#fde886"></div>
<div class="t" style="left:34px;top:823.2px;width:186px;overflow:hidden;font-size:11px;letter-spacing:0.22px;color:#1f1f1f"> özgül örneklerle değinmeniz gerekirdi</div>
<div class="t" style="left:220px;width:124px;text-align:right;top:823.2px;font-size:11px;color:#111;-webkit-text-stroke:0.25px #111">3,33</div>
<div class="t" style="left:623px;top:823.2px;width:123px;overflow:hidden;font-size:11px;letter-spacing:0.15px;color:#1f1f1f">Yanıtınız, teknolojik araç</div>
<div class="t" style="left:754.5px;top:823.2px;font-size:11px;color:#1f1f1f">gpt-4.1</div>
<div class="t" style="left:886px;top:823.2px;font-size:11px;color:#1f1f1f">v3.1</div>
<div class="ab" style="left:0;top:841px;width:33px;height:26.5px;background:#fff;border-right:1px solid #c7c7c7;border-bottom:1px solid #dadce0"></div>
<div class="t" style="left:0;width:27px;text-align:center;top:849.25px;font-size:10px;color:#444;font-weight:400">21</div>
<div class="ab" style="left:33px;top:841px;width:1625px;height:26.5px;background:#f8f8fa"></div>
<div class="ab" style="left:220px;top:841px;width:132px;height:26.5px;background:#fde886"></div>
<div class="t" style="left:34px;top:849.45px;width:186px;overflow:hidden;font-size:11px;letter-spacing:0.22px;color:#1f1f1f">ayrıntılı açıklamanız beklenirdi. Açıklama</div>
<div class="t" style="left:220px;width:124px;text-align:right;top:849.45px;font-size:11px;color:#111;-webkit-text-stroke:0.25px #111">2,67</div>
<div class="t" style="left:623px;top:849.45px;width:123px;overflow:hidden;font-size:11px;letter-spacing:0.15px;color:#1f1f1f">Yanıtınızda teknolojik ara</div>
<div class="t" style="left:754.5px;top:849.45px;font-size:11px;color:#1f1f1f">gpt-4.1</div>
<div class="t" style="left:886px;top:849.45px;font-size:11px;color:#1f1f1f">v3.1</div>
<div class="ab" style="left:0;top:867.5px;width:33px;height:26px;background:#fff;border-right:1px solid #c7c7c7;border-bottom:1px solid #dadce0"></div>
<div class="t" style="left:0;width:27px;text-align:center;top:875.5px;font-size:10px;color:#444;font-weight:400">22</div>
<div class="ab" style="left:33px;top:867.5px;width:1625px;height:26px;background:#fff"></div>
<div class="ab" style="left:220px;top:867.5px;width:132px;height:26px;background:#fde886"></div>
<div class="t" style="left:34px;top:875.7px;width:186px;overflow:hidden;font-size:11px;letter-spacing:0.22px;color:#1f1f1f">eriniliği ekşikliği dikkat çekiyor</div>
<div class="t" style="left:220px;width:124px;text-align:right;top:875.7px;font-size:11px;color:#111;-webkit-text-stroke:0.25px #111">3,33</div>
<div class="t" style="left:623px;top:875.7px;width:123px;overflow:hidden;font-size:11px;letter-spacing:0.15px;color:#1f1f1f">Yanıtınızda kadın bakka</div>
<div class="t" style="left:754.5px;top:875.7px;font-size:11px;color:#1f1f1f">gpt-4.1</div>
<div class="t" style="left:886px;top:875.7px;font-size:11px;color:#1f1f1f">v3.1</div>
<div class="ab" style="left:615px;top:356px;width:132.5px;height:27px;border:2px solid #1a5fd0"></div>
<div class="ab" style="left:743.5px;top:379px;width:7px;height:7px;border-radius:50%;background:#1a5fd0;border:1px solid #fff"></div>
<div class="ab" style="left:1658px;top:201px;width:10px;height:677px;background:#f8f9fa;border-left:1px solid #e6e6e6"></div>
<div class="ab" style="left:1659px;top:305.5px;width:8px;height:144px;border-radius:4px;background:#dadce0"></div>
<div class="ab" style="left:0;top:802px;width:1668px;height:76px;background:linear-gradient(rgba(0,0,0,0),rgba(0,0,0,0.06) 50%,rgba(0,0,0,0.17))"></div>
</div>
<div class="ab" style="left:1668px;top:0;width:245px;height:948px;background:#000"></div>
<div class="ab" style="left:1668px;top:8px;width:245px;height:142px;overflow:hidden" id="tile0">
<svg style="left:0;top:0" width="245" height="142" viewBox="0 0 245 142"><defs><filter id="bl0" x="-5%" y="-5%" width="110%" height="110%"><feGaussianBlur stdDeviation="1.3"/></filter></defs><g filter="url(#bl0)">
<rect x="-5" y="-5" width="255" height="152" fill="#dad9d6"/>
<polygon points="-5,-5 250,-5 250,20 200,60 60,65 -5,30" fill="#e2e1de"/>
<polygon points="-5,30 62,68 62,92 -5,60" fill="#efeeec"/>
<polygon points="160,48 215,38 215,150 160,150" fill="#c7c6c3"/>
<polygon points="178,48 195,44 195,72 178,72" fill="#ececea"/>
<polygon points="215,38 250,8 250,150 215,150" fill="#e4e3e0"/>
<rect x="236" y="75" width="9" height="45" fill="#cfd0d0"/>
<polygon points="-5,72 36,80 36,150 -5,150" fill="#c3c9ce"/>
<rect x="-5" y="125" width="22" height="25" fill="#55604f"/>
<polygon points="-5,52 52,86 52,92 -5,60" fill="#2b2b2d"/>
<rect x="35" y="88" width="15" height="62" fill="#4a4b4f"/>
<path d="M62,150 C64,112 78,92 110,86 L150,86 C185,90 198,110 202,150 Z" fill="#efedeb"/>
<path d="M108,30 C108,12 152,10 152,30 L150,45 L110,45 Z" fill="#3f2c22"/>
<ellipse cx="129" cy="62" rx="20" ry="27" fill="#c39a82"/>
<path d="M100,70 C98,56 118,52 124,62 L128,100 C126,116 108,118 104,104 Z" fill="#bd9078"/>
</g></svg>
<div class="ab" style="left:8px;top:118px;width:154px;height:24px;border-radius:5px 5px 0 0;background:rgba(40,40,40,0.62)"></div>
<div class="t" style="left:13px;top:122.5px;font-size:15px;color:#fff;letter-spacing:1.0px">Durgungoz, Ahmet</div>
</div>
<div class="ab" style="left:1668px;top:164px;width:245px;height:138px;overflow:hidden" id="tile1">
<svg style="left:0;top:0" width="245" height="138" viewBox="0 0 245 138"><defs><filter id="bl1" x="-5%" y="-5%" width="110%" height="110%"><feGaussianBlur stdDeviation="1.3"/></filter></defs><g filter="url(#bl1)">
<rect x="-5" y="-5" width="255" height="150" fill="#e7e4de"/>
<rect x="120" y="-5" width="65" height="150" fill="#ebe9e4"/>
<rect x="183" y="-5" width="28" height="100" fill="#e8dfc8"/>
<g fill="#ddd2b6"><rect x="183" y="2" width="28" height="3"/><rect x="183" y="14" width="28" height="3"/><rect x="183" y="26" width="28" height="3"/><rect x="183" y="38" width="28" height="3"/><rect x="183" y="50" width="28" height="3"/><rect x="183" y="62" width="28" height="3"/><rect x="183" y="74" width="28" height="3"/><rect x="183" y="86" width="28" height="3"/></g>
<rect x="210" y="-5" width="40" height="100" fill="#f3f1ec"/>
<rect x="195" y="95" width="55" height="20" fill="#d8cfae"/>
<rect x="195" y="108" width="55" height="35" fill="#dcd8d0"/>
<rect x="42" y="85" width="55" height="37" fill="#5e5e5c"/>
<rect x="47" y="90" width="45" height="28" fill="#7b7b78"/>
<rect x="0" y="110" width="45" height="30" fill="#bdbab5"/>
<rect x="0" y="118" width="5" height="15" fill="#c03030"/>
<rect x="160" y="33" width="8" height="15" fill="#3a2a2a"/>
<rect x="168" y="56" width="30" height="80" rx="8" fill="#262525"/>
<path d="M96,138 C94,100 100,62 112,42 C124,24 158,24 172,42 C186,62 188,100 194,138 Z" fill="#8f5e3e"/>
<rect x="127" y="88" width="20" height="22" fill="#cfa893"/><ellipse cx="137" cy="66" rx="22" ry="29" fill="#dbb6a1"/>
<rect x="114" y="62" width="22" height="12" rx="6" fill="none" stroke="#2c1f1a" stroke-width="2.5"/>
<rect x="138" y="62" width="22" height="12" rx="6" fill="none" stroke="#2c1f1a" stroke-width="2.5"/>
<path d="M90,140 C95,120 112,110 137,110 C162,110 185,116 205,140 Z" fill="#1f1d1d"/><path d="M96,138 C100,118 104,104 112,96 L118,138 Z M178,96 C186,106 190,120 194,138 L160,138 Z" fill="#8a5a3b"/>
</g></svg>
<div class="ab" style="left:8px;top:114px;width:132px;height:24px;border-radius:5px 5px 0 0;background:rgba(40,40,40,0.62)"></div>
<div class="t" style="left:13px;top:118.5px;font-size:15px;color:#fff;letter-spacing:0.05px">MERIC OZGELDI</div>
</div>
<div class="ab" style="left:1668px;top:318px;width:245px;height:138px;overflow:hidden" id="tile2">
<svg style="left:0;top:0" width="245" height="138" viewBox="0 0 245 138"><defs><filter id="bl2" x="-5%" y="-5%" width="110%" height="110%"><feGaussianBlur stdDeviation="1.3"/></filter></defs><g filter="url(#bl2)">
<rect x="-5" y="-5" width="255" height="150" fill="#d9d7d3"/>
<rect x="-5" y="-5" width="19" height="150" fill="#dcdcde"/>
<rect x="14" y="-5" width="122" height="118" fill="#3e3129"/>
<rect x="34" y="-5" width="98" height="97" fill="#fafaf8"/>
<rect x="132" y="-5" width="25" height="30" fill="#a39d92"/>
<rect x="136" y="25" width="21" height="90" fill="#cfcbc3"/>
<rect x="157" y="-5" width="95" height="122" fill="#ece7d8"/>
<g fill="#bdb6a6"><rect x="157" y="8" width="95" height="3"/><rect x="157" y="22" width="95" height="3"/><rect x="157" y="36" width="95" height="3"/><rect x="157" y="50" width="95" height="3"/><rect x="157" y="64" width="95" height="3"/><rect x="157" y="78" width="95" height="3"/><rect x="157" y="92" width="95" height="3"/><rect x="157" y="106" width="95" height="3"/></g>
<rect x="-5" y="112" width="255" height="8" fill="#cfcdc8"/>
<rect x="-5" y="118" width="255" height="25" fill="#9c9a95"/>
<rect x="72" y="72" width="26" height="42" fill="#d8d1c6"/>
<path d="M96,78 C92,55 104,35 125,28 C150,20 185,25 202,45 C216,62 218,85 210,108 C206,122 200,135 195,140 L108,140 C100,120 98,98 96,78 Z" fill="#1b1513"/>
<ellipse cx="160" cy="108" rx="22" ry="24" fill="#3d2e29"/>
<path d="M84,142 C92,125 108,116 130,118 L128,142 Z" fill="#b0ada8"/>
<path d="M190,142 C196,128 205,120 218,118 L230,142 Z" fill="#b8b5b0"/>
</g></svg>
<div class="ab" style="left:8px;top:114px;width:144px;height:24px;border-radius:5px 5px 0 0;background:rgba(40,40,40,0.62)"></div>
<div class="t" style="left:13px;top:118.5px;font-size:15px;color:#fff;letter-spacing:0.5px">Asena Yücedağlar</div>
</div>
<div class="ab" style="left:1668px;top:474px;width:245px;height:138px;overflow:hidden" id="tile3">
<div class="ab" style="left:0;top:0;width:245px;height:138px;background:#1c1c1c"></div>
<div class="ab" style="left:8px;top:114px;width:119px;height:24px;border-radius:5px 5px 0 0;background:rgba(40,40,40,0.62)"></div>
<div class="t" style="left:13px;top:118.5px;font-size:15px;color:#fff;letter-spacing:0.65px">Serhat Gökkan</div>
</div>
<div class="ab" style="left:1668px;top:630px;width:245px;height:138px;overflow:hidden" id="tile4">
<div class="ab" style="left:0;top:0;width:245px;height:138px;background:#87888f"></div>
<svg style="left:108px;top:55px" width="30" height="30" viewBox="0 0 30 30"><rect x="5" y="7" width="20" height="15" stroke="#fff" stroke-width="1.3" fill="none"/><path d="M1 27H29L25 22H5Z" stroke="#fff" stroke-width="1.3" fill="none"/><circle cx="15" cy="6" r="5" stroke="#fff" stroke-width="1.3" fill="#87888f"/><rect x="11.5" y="4" width="7" height="4" rx="2" fill="#fff"/></svg>
<div class="ab" style="left:8px;top:114px;width:226px;height:24px;border-radius:5px 5px 0 0;background:rgba(40,40,40,0.62)"></div>
<div class="t" style="left:13px;top:118.5px;font-size:15px;color:#fff;letter-spacing:0.75px">Dr. Öğretim Üyesi Mine BÜ...</div>
</div>
<div class="ab" style="left:1668px;top:784px;width:245px;height:138px;overflow:hidden" id="tile5">
<svg style="left:0;top:0" width="245" height="138" viewBox="0 0 245 138"><defs><filter id="bl5" x="-5%" y="-5%" width="110%" height="110%"><feGaussianBlur stdDeviation="1.3"/></filter></defs><g filter="url(#bl5)">
<rect x="-5" y="-5" width="255" height="150" fill="#e4e5e3"/>
<rect x="130" y="-5" width="25" height="60" fill="#262524"/>
<rect x="196" y="7" width="47" height="36" fill="#7f9cb6"/>
<rect x="196" y="7" width="47" height="14" fill="#c7d2d6"/>
<rect x="181" y="27" width="8" height="24" fill="#8a6a3a"/>
<rect x="197" y="33" width="6" height="18" fill="#7a5a30"/>
<polygon points="58,50 98,48 98,75 58,82" fill="#242323"/>
<rect x="97" y="50" width="150" height="95" fill="#1c1c1d"/>
<rect x="207" y="75" width="28" height="13" fill="#c9d3e0"/>
<rect x="200" y="88" width="48" height="55" fill="#161616"/>
<path d="M6,140 L6,92 C8,80 16,70 22,60 L22,52 M22,60 C30,72 46,80 54,88 L50,140" stroke="#161616" stroke-width="5" fill="none" stroke-linejoin="round"/><path d="M6,112 L50,104" stroke="#161616" stroke-width="4"/>
<path d="M80,142 C82,110 96,92 130,88 C165,92 178,110 180,142 Z" fill="#1b2441"/>
<polygon points="112,86 152,86 140,142 122,142" fill="#5c78b0"/>
<path d="M110,62 C106,36 124,30 137,32 C156,32 168,44 160,66 Z" fill="#1e1715"/>
<ellipse cx="132" cy="68" rx="17" ry="21" fill="#cba493"/>
<rect x="114" y="59" width="16" height="8" rx="3" fill="none" stroke="#8b2f2f" stroke-width="1.5"/>
<rect x="133" y="59" width="16" height="8" rx="3" fill="none" stroke="#8b2f2f" stroke-width="1.5"/>
</g></svg>
<div class="ab" style="left:8px;top:114px;width:226px;height:24px;border-radius:5px 5px 0 0;background:rgba(40,40,40,0.62)"></div>
<div class="t" style="left:13px;top:118.5px;font-size:15px;color:#fff;letter-spacing:0.5px">Prof.Dr. Tuğba YANPAR YE...</div>
</div>
</body></html>
